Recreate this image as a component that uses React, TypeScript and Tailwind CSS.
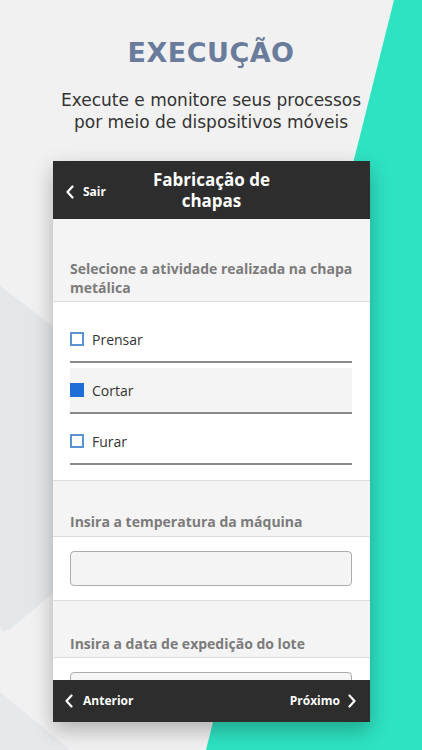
import React from 'react';

const UI = { fontFamily: '"Open Sans", "Liberation Sans", sans-serif' };

function Chevron({ dir = 'left' }: { dir?: 'left' | 'right' }) {
  return (
    <svg width="8" height="14" viewBox="0 0 8 14" fill="none">
      <path
        d={dir === 'left' ? 'M6.5 1.5 L1.5 7 L6.5 12.5' : 'M1.5 1.5 L6.5 7 L1.5 12.5'}
        stroke="#ffffff"
        strokeWidth="2.2"
        strokeLinecap="round"
        strokeLinejoin="round"
      />
    </svg>
  );
}

function Option({ label, checked }: { label: string; checked?: boolean }) {
  return (
    <div>
      <div className={`flex items-center h-[44px] ${checked ? 'bg-[#f4f4f4]' : ''}`}>
        {checked ? (
          <span className="w-[14px] h-[14px] bg-[#1d6fd8]" />
        ) : (
          <span className="w-[14px] h-[14px] border-2 border-[#5b93d3] bg-white" />
        )}
        <span className="ml-[8px] text-[14px] text-[#333333]">{label}</span>
      </div>
      <div className="h-[2px] bg-[#8a8a8a]" />
    </div>
  );
}

export default function App() {
  return (
    <div className="relative w-[422px] h-[750px] overflow-hidden bg-[#f1f1f1]">
      {/* background shapes */}
      <svg className="absolute inset-0" width="422" height="750" viewBox="0 0 422 750">
        <path d="M0 286 L140 392 L140 520 L14 626 Q0 638 0 622 Z" fill="#e4e7ea" />
        <path d="M0 692 L70 750 L0 750 Z" fill="#e6e8eb" />
        <path d="M394 0 L422 0 L422 750 L206 750 Z" fill="#2ee3c2" />
      </svg>

      <div className="relative flex flex-col items-center">
        <h1
          className="mt-[36px] text-[27px] leading-[34px] font-bold tracking-[0.5px] text-[#6a7c9c]"
          style={{ fontFamily: '"DejaVu Sans", "Open Sans", sans-serif' }}
        >
          EXECUÇÃO
        </h1>
        <p
          className="mt-[19px] text-center text-[17px] leading-[22px] text-[#333333]"
          style={{ fontFamily: '"DejaVu Sans", "Open Sans", sans-serif' }}
        >
          Execute e monitore seus processos
          <br />
          por meio de dispositivos móveis
        </p>

        {/* phone card */}
        <div
          className="mt-[28px] ml-[1px] w-[317px] h-[561px] flex flex-col bg-white shadow-[0_8px_20px_rgba(0,0,0,0.28)]"
          style={UI}
        >
          <div className="relative h-[58px] bg-[#2d2d2d] flex items-center justify-center shrink-0">
            <div className="absolute left-[13px] top-[22px] flex items-center gap-[9px]">
              <Chevron />
              <span className="text-[12px] font-bold text-white">Sair</span>
            </div>
            <div className="text-center text-[17px] leading-[21px] font-bold text-white">
              Fabricação de
              <br />
              chapas
            </div>
          </div>

          <div className="flex-1 overflow-hidden flex flex-col">
            <div className="bg-[#f4f4f4] px-[17px] pt-[40px] pb-[4px] border-b border-[#dcdcdc]">
              <p className="text-[14px] leading-[19px] font-bold text-[#7b7b7b]">
                Selecione a atividade realizada na chapa metálica
              </p>
            </div>

            <div className="bg-white pl-[17px] pr-[18px] pt-[15px] pb-[15px] flex flex-col gap-[5px] border-b border-[#dcdcdc]">
              <Option label="Prensar" />
              <Option label="Cortar" checked />
              <Option label="Furar" />
            </div>

            <div className="bg-[#f4f4f4] px-[17px] pt-[31px] pb-[5px] border-b border-[#dcdcdc]">
              <p className="text-[14px] leading-[19px] font-bold text-[#7b7b7b]">
                Insira a temperatura da máquina
              </p>
            </div>

            <div className="bg-white pl-[17px] pr-[18px] pt-[14px] pb-[14px] border-b border-[#dcdcdc]">
              <div className="h-[35px] rounded-[4px] border border-[#ababab] bg-[#f4f4f4]" />
            </div>

            <div className="bg-[#f4f4f4] px-[17px] pt-[33px] pb-[4px] border-b border-[#dcdcdc]">
              <p className="text-[14px] leading-[19px] font-bold text-[#7b7b7b]">
                Insira a data de expedição do lote
              </p>
            </div>

            <div className="bg-white pl-[17px] pr-[18px] pt-[14px] pb-[14px]">
              <div className="h-[35px] rounded-[4px] border border-[#ababab] bg-[#f4f4f4]" />
            </div>
          </div>

          <div className="h-[42px] bg-[#2d2d2d] flex items-center justify-between pl-[12px] pr-[14px] shrink-0">
            <div className="flex items-center gap-[10px]">
              <Chevron />
              <span className="text-[12px] font-bold text-white">Anterior</span>
            </div>
            <div className="flex items-center gap-[8px]">
              <span className="text-[12px] font-bold text-white">Próximo</span>
              <Chevron dir="right" />
            </div>
          </div>
        </div>
      </div>
    </div>
  );
}
